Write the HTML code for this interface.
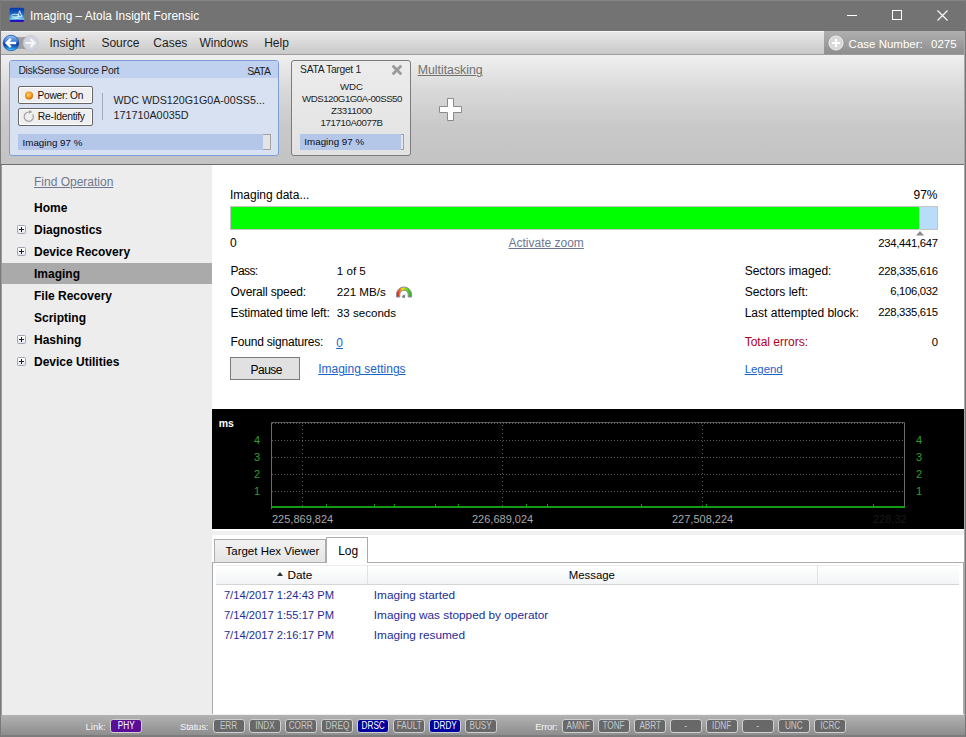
<!DOCTYPE html><html><head><meta charset="utf-8"><style>
html,body{margin:0;padding:0;width:966px;height:737px;overflow:hidden;font-family:"Liberation Sans", sans-serif;}
</style></head><body><div style="position:relative;width:966px;height:737px;overflow:hidden">
<div style="position:absolute;left:0px;top:0px;width:966px;height:737px;background:#f0f0f0"></div>
<div style="position:absolute;left:0px;top:0px;width:966px;height:31px;background:#737373"></div>
<div style="position:absolute;left:0px;top:0px;width:966px;height:1px;background:#858585"></div>
<svg style="position:absolute;left:9px;top:7px" width="16" height="16" viewBox="0 0 16 16">
<defs><linearGradient id="ig" x1="0" y1="0" x2="0" y2="1"><stop offset="0" stop-color="#0636a6"/><stop offset="0.4" stop-color="#1a62c4"/><stop offset="0.75" stop-color="#5ab6e6"/><stop offset="1" stop-color="#7ad8f0"/></linearGradient>
<radialGradient id="ic" cx="0.5" cy="0.5" r="0.5"><stop offset="0" stop-color="#b0fafc"/><stop offset="1" stop-color="#b0fafc" stop-opacity="0"/></radialGradient></defs>
<rect x="0.6" y="0.7" width="14.6" height="14.2" rx="1.6" fill="url(#ig)"/>
<ellipse cx="7.5" cy="11.6" rx="6.5" ry="2.8" fill="url(#ic)"/>
<path d="M0.6 13 Q8 11.8 15.2 13 L15.2 13.4 Q15.2 14.9 13.7 14.9 L2.1 14.9 Q0.6 14.9 0.6 13.4 Z" fill="#2612b6"/>
<ellipse cx="6.2" cy="8.7" rx="3.7" ry="1.5" fill="none" stroke="#eaf6ff" stroke-width="0.9"/>
<path d="M10.6 3.8 L8.9 9.4 L12.8 9.4 Z" fill="none" stroke="#eaf6ff" stroke-width="0.9" stroke-linejoin="round"/>
</svg>
<div style="position:absolute;top:7.88px;font-size:11.9px;line-height:16px;color:#ffffff;white-space:nowrap;left:30px;">Imaging – Atola Insight Forensic</div>
<div style="position:absolute;left:847px;top:15px;width:10px;height:1px;background:#fff"></div>
<div style="position:absolute;left:892px;top:10px;width:10px;height:10px;border:1px solid #fff;box-sizing:border-box"></div>
<svg style="position:absolute;left:937px;top:10px" width="11" height="11" viewBox="0 0 11 11"><path d="M0.5 0.5 L10.5 10.5 M10.5 0.5 L0.5 10.5" stroke="#fff" stroke-width="1.1"/></svg>
<div style="position:absolute;left:1px;top:31px;width:964px;height:23px;background:linear-gradient(#e9e9e9,#c9c9c9)"></div>
<div style="position:absolute;left:1px;top:31px;width:964px;height:1px;background:#f6f6f6"></div>
<div style="position:absolute;left:1px;top:54px;width:964px;height:1px;background:#9c9c9c"></div>
<svg style="position:absolute;left:0px;top:31px" width="42" height="24" viewBox="0 0 42 24">
<defs><linearGradient id="bb" x1="0" y1="0" x2="0" y2="1"><stop offset="0" stop-color="#9cc4f4"/><stop offset="0.4" stop-color="#3a7ad8"/><stop offset="0.55" stop-color="#0a3898"/><stop offset="0.8" stop-color="#1a7ad8"/><stop offset="1" stop-color="#5ae0fc"/></linearGradient></defs>
<path d="M11 4.5 Q21 8 31 4.5 L31 19.5 Q21 16 11 19.5 Z" fill="#9e9e9e"/>
<circle cx="30.8" cy="12" r="7.6" fill="#d2d4dd" stroke="#c2c6d6" stroke-width="0.8"/>
<path d="M25.5 12 H34 M30.5 8 L34.5 12 L30.5 16" stroke="#f6f6f8" stroke-width="2.2" fill="none"/>
<circle cx="11" cy="12" r="7.8" fill="url(#bb)" stroke="#1646a6" stroke-width="0.7"/>
<path d="M16.2 12 H7 M10.8 7.8 L6.6 12 L10.8 16.2" stroke="#fff" stroke-width="2.4" fill="none"/>
</svg>
<div style="position:absolute;top:34.84px;font-size:12px;line-height:16px;color:#1e1e1e;white-space:nowrap;left:49.5px;">Insight</div>
<div style="position:absolute;top:34.84px;font-size:12px;line-height:16px;color:#1e1e1e;white-space:nowrap;left:101.4px;">Source</div>
<div style="position:absolute;top:34.84px;font-size:12px;line-height:16px;color:#1e1e1e;white-space:nowrap;left:153.3px;">Cases</div>
<div style="position:absolute;top:34.84px;font-size:12px;line-height:16px;color:#1e1e1e;white-space:nowrap;left:199.4px;">Windows</div>
<div style="position:absolute;top:34.84px;font-size:12px;line-height:16px;color:#1e1e1e;white-space:nowrap;left:264.2px;">Help</div>
<div style="position:absolute;left:824px;top:31px;width:140px;height:23px;background:linear-gradient(#b0b0b0,#8e8e8e)"></div>
<svg style="position:absolute;left:828px;top:35px" width="16" height="16" viewBox="0 0 16 16">
<circle cx="8" cy="8" r="7" fill="#d8d8d8" stroke="#eeeeee" stroke-width="1"/>
<path d="M8 4 V12 M4 8 H12" stroke="#fff" stroke-width="2.2"/></svg>
<div style="position:absolute;top:36.02px;font-size:11.5px;line-height:16px;color:#ffffff;white-space:nowrap;left:848.6px;">Case Number:</div>
<div style="position:absolute;top:36.02px;font-size:11.5px;line-height:16px;color:#ffffff;white-space:nowrap;left:931px;">0275</div>
<div style="position:absolute;left:1px;top:55px;width:964px;height:109px;background:linear-gradient(#f0f0f0 0%,#dadada 30%,#c9c9c9 65%,#c3c3c3 100%)"></div>
<div style="position:absolute;left:1px;top:164px;width:964px;height:1px;background:#6e6e6e"></div>
<div style="position:absolute;left:9px;top:60px;width:270px;height:96px;border:1px solid #7e9dd4;border-radius:3px;box-sizing:border-box;background:#d7e1f1;overflow:hidden"></div>
<div style="position:absolute;left:10px;top:61px;width:268px;height:17px;background:#bfd1ef;border-radius:2px 2px 0 0"></div>
<div style="position:absolute;top:62.70px;font-size:10.4px;line-height:16px;color:#1e1e1e;white-space:nowrap;letter-spacing:-0.32px;left:18.4px;">DiskSense Source Port</div>
<div style="position:absolute;top:62.66px;font-size:10.5px;line-height:16px;color:#1e1e1e;white-space:nowrap;letter-spacing:-0.7px;right:695.8px;text-align:right;">SATA</div>
<div style="position:absolute;left:18px;top:86px;width:75px;height:18px;border:1px solid #666;border-radius:2px;box-sizing:border-box;background:#efefef;box-shadow:inset 0 0 0 1px #fff"></div>
<div style="position:absolute;left:18px;top:108px;width:75px;height:18px;border:1px solid #666;border-radius:2px;box-sizing:border-box;background:#efefef;box-shadow:inset 0 0 0 1px #fff"></div>
<div style="position:absolute;top:88.27px;font-size:10.2px;line-height:16px;color:#111;white-space:nowrap;letter-spacing:-0.3px;left:37.6px;">Power: On</div>
<div style="position:absolute;top:109.20px;font-size:10.4px;line-height:16px;color:#111;white-space:nowrap;letter-spacing:-0.3px;left:37.8px;">Re-Identify</div>
<svg style="position:absolute;left:24px;top:91px" width="10" height="10" viewBox="0 0 10 10">
<defs><radialGradient id="og" cx="0.45" cy="0.4" r="0.6"><stop offset="0" stop-color="#ffd27a"/><stop offset="0.6" stop-color="#f49a1a"/><stop offset="1" stop-color="#c86a00"/></radialGradient></defs>
<circle cx="5" cy="4.5" r="4" fill="url(#og)"/></svg>
<svg style="position:absolute;left:23px;top:109px" width="12" height="14" viewBox="0 0 12 14">
<path d="M9.78 5.4 A4.6 4.6 0 1 1 5.8 3.1" stroke="#a6a6a6" stroke-width="1.3" fill="none"/>
<path d="M6 1 L9.6 2.9 L6 4.8 Z" fill="#a6a6a6"/></svg>
<div style="position:absolute;left:102px;top:93px;width:1px;height:27px;background:#9fa9ba"></div>
<div style="position:absolute;top:92.29px;font-size:10.7px;line-height:16px;color:#1e1e1e;white-space:nowrap;left:113.4px;">WDC WDS120G1G0A-00SS5...</div>
<div style="position:absolute;top:107.26px;font-size:10.8px;line-height:16px;color:#1e1e1e;white-space:nowrap;left:113.4px;">171710A0035D</div>
<div style="position:absolute;left:18px;top:134px;width:253px;height:16px;background:#b5c7e8"></div>
<div style="position:absolute;left:263px;top:134px;width:8px;height:16px;background:#e4e4e4;border:1px solid #a2a2a2;border-left:none;box-sizing:border-box"></div>
<div style="position:absolute;top:134.70px;font-size:9.8px;line-height:16px;color:#0c0c14;white-space:nowrap;left:22.5px;">Imaging 97 %</div>
<div style="position:absolute;left:291px;top:60px;width:120px;height:96px;border:1px solid #7c7c7c;border-radius:3px;box-sizing:border-box;background:linear-gradient(#ececec,#e2e2e2)"></div>
<div style="position:absolute;top:62.43px;font-size:10.3px;line-height:16px;color:#1e1e1e;white-space:nowrap;letter-spacing:-0.3px;left:300.1px;">SATA Target 1</div>
<svg style="position:absolute;left:392px;top:65px" width="10" height="10" viewBox="0 0 10 10"><path d="M1.6 1.6 L8.4 8.4 M8.4 1.6 L1.6 8.4" stroke="#9a9a9a" stroke-width="2.8" stroke-linecap="square"/></svg>
<div style="position:absolute;top:79.44px;font-size:9.7px;line-height:16px;color:#1e1e1e;white-space:nowrap;left:151.5px;width:400px;text-align:center;">WDC</div>
<div style="position:absolute;top:91.14px;font-size:9.7px;line-height:16px;color:#1e1e1e;white-space:nowrap;letter-spacing:-0.5px;left:152px;width:400px;text-align:center;">WDS120G1G0A-00SS50</div>
<div style="position:absolute;top:103.04px;font-size:9.7px;line-height:16px;color:#1e1e1e;white-space:nowrap;letter-spacing:-0.25px;left:151.5px;width:400px;text-align:center;">Z3311000</div>
<div style="position:absolute;top:114.94px;font-size:9.7px;line-height:16px;color:#1e1e1e;white-space:nowrap;letter-spacing:-0.4px;left:151.5px;width:400px;text-align:center;">171710A0077B</div>
<div style="position:absolute;left:300px;top:134px;width:101px;height:16px;background:#b5c7e8"></div>
<div style="position:absolute;left:401px;top:134px;width:3px;height:16px;background:#e4e4e4;border:1px solid #a2a2a2;border-left:none;box-sizing:border-box"></div>
<div style="position:absolute;top:134.20px;font-size:9.8px;line-height:16px;color:#0c0c14;white-space:nowrap;left:304.3px;">Imaging 97 %</div>
<div style="position:absolute;top:62.24px;font-size:12.3px;line-height:16px;color:#727272;white-space:nowrap;left:417.7px;"><u>Multitasking</u></div>
<svg style="position:absolute;left:438px;top:97px" width="26" height="25" viewBox="0 0 26 25">
<path d="M9.5 1.5 H15.5 V9.5 H23.5 V15.5 H15.5 V23.5 H9.5 V15.5 H1.5 V9.5 H9.5 Z" fill="#fff" stroke="#8a8a8a" stroke-width="1"/></svg>
<div style="position:absolute;left:1px;top:165px;width:211px;height:550px;background:#ededed"></div>
<div style="position:absolute;top:173.84px;font-size:12px;line-height:16px;color:#6e7890;white-space:nowrap;left:34px;"><u>Find Operation</u></div>
<div style="position:absolute;left:1px;top:263px;width:211px;height:21px;background:#aaaaaa"></div>
<div style="position:absolute;top:199.84px;font-size:12px;line-height:16px;color:#000;white-space:nowrap;font-weight:bold;left:34px;">Home</div>
<div style="position:absolute;top:221.84px;font-size:12px;line-height:16px;color:#000;white-space:nowrap;font-weight:bold;left:34px;">Diagnostics</div>
<div style="position:absolute;left:17px;top:225px;width:9px;height:9px;border:1px solid #a0a4b4;border-radius:1.5px;box-sizing:border-box;background:linear-gradient(#ffffff,#e2e6ee)"></div>
<div style="position:absolute;left:19px;top:229px;width:5px;height:1px;background:#222"></div>
<div style="position:absolute;left:21px;top:227px;width:1px;height:5px;background:#222"></div>
<div style="position:absolute;top:243.84px;font-size:12px;line-height:16px;color:#000;white-space:nowrap;font-weight:bold;left:34px;">Device Recovery</div>
<div style="position:absolute;left:17px;top:247px;width:9px;height:9px;border:1px solid #a0a4b4;border-radius:1.5px;box-sizing:border-box;background:linear-gradient(#ffffff,#e2e6ee)"></div>
<div style="position:absolute;left:19px;top:251px;width:5px;height:1px;background:#222"></div>
<div style="position:absolute;left:21px;top:249px;width:1px;height:5px;background:#222"></div>
<div style="position:absolute;top:265.84px;font-size:12px;line-height:16px;color:#000;white-space:nowrap;font-weight:bold;left:34px;">Imaging</div>
<div style="position:absolute;top:287.84px;font-size:12px;line-height:16px;color:#000;white-space:nowrap;font-weight:bold;left:34px;">File Recovery</div>
<div style="position:absolute;top:309.84px;font-size:12px;line-height:16px;color:#000;white-space:nowrap;font-weight:bold;left:34px;">Scripting</div>
<div style="position:absolute;top:331.84px;font-size:12px;line-height:16px;color:#000;white-space:nowrap;font-weight:bold;left:34px;">Hashing</div>
<div style="position:absolute;left:17px;top:335px;width:9px;height:9px;border:1px solid #a0a4b4;border-radius:1.5px;box-sizing:border-box;background:linear-gradient(#ffffff,#e2e6ee)"></div>
<div style="position:absolute;left:19px;top:339px;width:5px;height:1px;background:#222"></div>
<div style="position:absolute;left:21px;top:337px;width:1px;height:5px;background:#222"></div>
<div style="position:absolute;top:353.84px;font-size:12px;line-height:16px;color:#000;white-space:nowrap;font-weight:bold;left:34px;">Device Utilities</div>
<div style="position:absolute;left:17px;top:357px;width:9px;height:9px;border:1px solid #a0a4b4;border-radius:1.5px;box-sizing:border-box;background:linear-gradient(#ffffff,#e2e6ee)"></div>
<div style="position:absolute;left:19px;top:361px;width:5px;height:1px;background:#222"></div>
<div style="position:absolute;left:21px;top:359px;width:1px;height:5px;background:#222"></div>
<div style="position:absolute;left:212px;top:165px;width:752px;height:549px;background:#ffffff"></div>
<div style="position:absolute;top:186.84px;font-size:12px;line-height:16px;color:#000;white-space:nowrap;left:230px;">Imaging data...</div>
<div style="position:absolute;top:186.84px;font-size:12px;line-height:16px;color:#000;white-space:nowrap;right:28.5px;text-align:right;">97%</div>
<div style="position:absolute;left:230px;top:206px;width:708px;height:24px;border:1px solid #c4c4c4;box-sizing:border-box;background:#b8dcfa"></div>
<div style="position:absolute;left:231px;top:207px;width:688px;height:22px;background:#00ff00"></div>
<svg style="position:absolute;left:915px;top:230px" width="10" height="6" viewBox="0 0 10 6"><path d="M1 5.5 L5 1 L9 5.5 Z" fill="#8a8a8a"/></svg>
<div style="position:absolute;top:234.54px;font-size:12px;line-height:16px;color:#000;white-space:nowrap;left:230px;">0</div>
<div style="position:absolute;top:234.84px;font-size:12px;line-height:16px;color:#6b7792;white-space:nowrap;left:508.5px;"><u>Activate zoom</u></div>
<div style="position:absolute;top:234.88px;font-size:11.3px;line-height:16px;color:#000;white-space:nowrap;letter-spacing:-0.3px;right:28.200000000000045px;text-align:right;">234,441,647</div>
<div style="position:absolute;top:262.94px;font-size:12px;line-height:16px;color:#000;white-space:nowrap;letter-spacing:-0.6px;left:230.6px;">Pass:</div>
<div style="position:absolute;top:263.08px;font-size:11.6px;line-height:16px;color:#000;white-space:nowrap;left:336.8px;">1 of 5</div>
<div style="position:absolute;top:283.64px;font-size:12px;line-height:16px;color:#000;white-space:nowrap;letter-spacing:-0.15px;left:230.6px;">Overall speed:</div>
<div style="position:absolute;top:283.78px;font-size:11.6px;line-height:16px;color:#000;white-space:nowrap;left:336.8px;">221 MB/s</div>
<div style="position:absolute;top:304.54px;font-size:12px;line-height:16px;color:#000;white-space:nowrap;letter-spacing:-0.15px;left:230.6px;">Estimated time left:</div>
<div style="position:absolute;top:304.68px;font-size:11.6px;line-height:16px;color:#000;white-space:nowrap;left:336.8px;">33 seconds</div>
<svg style="position:absolute;left:395px;top:286px" width="18" height="13" viewBox="0 0 18 13">
<defs><linearGradient id="gg" x1="0" y1="0" x2="1" y2="0"><stop offset="0.05" stop-color="#e81818"/><stop offset="0.25" stop-color="#f08018"/><stop offset="0.4" stop-color="#f0e010"/><stop offset="0.6" stop-color="#80e020"/><stop offset="1" stop-color="#20b020"/></linearGradient></defs>
<path d="M1.5 11 L1.5 8.5 A7.5 7.5 0 0 1 16.5 8.5 L16.5 11 L13.2 11 L13.2 8.5 A4.2 4.2 0 0 0 4.8 8.5 L4.8 11 Z" fill="url(#gg)" stroke="#8a8a9a" stroke-width="1"/>
<path d="M8 11.5 L10.5 7.5 L9.8 11.2 Z" fill="#808080"/><circle cx="8.6" cy="10.5" r="1.5" fill="#808080"/></svg>
<div style="position:absolute;top:333.54px;font-size:12px;line-height:16px;color:#000;white-space:nowrap;letter-spacing:-0.2px;left:230.6px;">Found signatures:</div>
<div style="position:absolute;top:334.54px;font-size:12px;line-height:16px;color:#1a62cc;white-space:nowrap;left:336.2px;"><u>0</u></div>
<div style="position:absolute;left:230px;top:357px;width:70px;height:23px;border:1px solid #7a7a7a;box-sizing:border-box;background:#e1e1e1"></div>
<div style="position:absolute;top:361.64px;font-size:12px;line-height:16px;color:#000;white-space:nowrap;letter-spacing:-0.5px;left:250.5px;">Pause</div>
<div style="position:absolute;top:361.44px;font-size:12px;line-height:16px;color:#1a62cc;white-space:nowrap;left:318.2px;"><u>Imaging settings</u></div>
<div style="position:absolute;top:263.14px;font-size:12px;line-height:16px;color:#000;white-space:nowrap;left:744.7px;">Sectors imaged:</div>
<div style="position:absolute;top:262.68px;font-size:11.3px;line-height:16px;color:#000;white-space:nowrap;letter-spacing:-0.3px;right:28.200000000000045px;text-align:right;">228,335,616</div>
<div style="position:absolute;top:283.94px;font-size:12px;line-height:16px;color:#000;white-space:nowrap;left:744.7px;">Sectors left:</div>
<div style="position:absolute;top:283.48px;font-size:11.3px;line-height:16px;color:#000;white-space:nowrap;letter-spacing:-0.3px;right:28.200000000000045px;text-align:right;">6,106,032</div>
<div style="position:absolute;top:304.84px;font-size:12px;line-height:16px;color:#000;white-space:nowrap;left:744.7px;">Last attempted block:</div>
<div style="position:absolute;top:304.38px;font-size:11.3px;line-height:16px;color:#000;white-space:nowrap;letter-spacing:-0.3px;right:28.200000000000045px;text-align:right;">228,335,615</div>
<div style="position:absolute;top:334.04px;font-size:12px;line-height:16px;color:#b0001e;white-space:nowrap;left:744.7px;">Total errors:</div>
<div style="position:absolute;top:333.58px;font-size:11.3px;line-height:16px;color:#000;white-space:nowrap;letter-spacing:-0.3px;right:28.200000000000045px;text-align:right;">0</div>
<div style="position:absolute;top:361.25px;font-size:11.4px;line-height:16px;color:#1a62cc;white-space:nowrap;left:744.7px;"><u>Legend</u></div>
<div style="position:absolute;left:212px;top:409px;width:752px;height:120px;background:#000"></div>
<div style="position:absolute;top:415.36px;font-size:10.5px;line-height:16px;color:#fff;white-space:nowrap;font-weight:bold;left:218.7px;">ms</div>
<div style="position:absolute;top:431.79px;font-size:11px;line-height:16px;color:#2aa12a;white-space:nowrap;left:254px;">4</div>
<div style="position:absolute;top:431.79px;font-size:11px;line-height:16px;color:#2aa12a;white-space:nowrap;left:916px;">4</div>
<div style="position:absolute;top:448.99px;font-size:11px;line-height:16px;color:#2aa12a;white-space:nowrap;left:254px;">3</div>
<div style="position:absolute;top:448.99px;font-size:11px;line-height:16px;color:#2aa12a;white-space:nowrap;left:916px;">3</div>
<div style="position:absolute;top:465.99px;font-size:11px;line-height:16px;color:#2aa12a;white-space:nowrap;left:254px;">2</div>
<div style="position:absolute;top:465.99px;font-size:11px;line-height:16px;color:#2aa12a;white-space:nowrap;left:916px;">2</div>
<div style="position:absolute;top:482.89px;font-size:11px;line-height:16px;color:#2aa12a;white-space:nowrap;left:254px;">1</div>
<div style="position:absolute;top:482.89px;font-size:11px;line-height:16px;color:#2aa12a;white-space:nowrap;left:916px;">1</div>
<svg style="position:absolute;left:212px;top:409px" width="752" height="120" viewBox="0 0 752 120"><line x1="59.5" y1="13.5" x2="59.5" y2="100" stroke="#6a6a6a" stroke-width="1"/><line x1="692.5" y1="13.5" x2="692.5" y2="99" stroke="#6a6a6a" stroke-width="1"/><line x1="59.5" y1="13.5" x2="692.5" y2="13.5" stroke="#5a5a5a" stroke-width="1"/><line x1="60" y1="14.5" x2="692" y2="14.5" stroke="#5a5a5a" stroke-width="1" stroke-dasharray="1 2"/><line x1="60" y1="31.5" x2="692" y2="31.5" stroke="#5a5a5a" stroke-width="1" stroke-dasharray="1 2"/><line x1="60" y1="48.5" x2="692" y2="48.5" stroke="#5a5a5a" stroke-width="1" stroke-dasharray="1 2"/><line x1="60" y1="65.5" x2="692" y2="65.5" stroke="#5a5a5a" stroke-width="1" stroke-dasharray="1 2"/><line x1="60" y1="82.5" x2="692" y2="82.5" stroke="#5a5a5a" stroke-width="1" stroke-dasharray="1 2"/><line x1="90.5" y1="16" x2="90.5" y2="97" stroke="#5a5a5a" stroke-width="1" stroke-dasharray="1 3"/><line x1="290.5" y1="16" x2="290.5" y2="97" stroke="#5a5a5a" stroke-width="1" stroke-dasharray="1 3"/><line x1="490.5" y1="16" x2="490.5" y2="97" stroke="#5a5a5a" stroke-width="1" stroke-dasharray="1 3"/><line x1="59" y1="98" x2="693" y2="98" stroke="#159a15" stroke-width="2"/><line x1="114.5" y1="95" x2="114.5" y2="97" stroke="#159a15" stroke-width="1"/><line x1="162.5" y1="95" x2="162.5" y2="97" stroke="#159a15" stroke-width="1"/><line x1="182.5" y1="95" x2="182.5" y2="97" stroke="#159a15" stroke-width="1"/><line x1="223.5" y1="95" x2="223.5" y2="97" stroke="#159a15" stroke-width="1"/><line x1="246.5" y1="95" x2="246.5" y2="97" stroke="#159a15" stroke-width="1"/><line x1="314.5" y1="95" x2="314.5" y2="97" stroke="#159a15" stroke-width="1"/><line x1="335.5" y1="95" x2="335.5" y2="97" stroke="#159a15" stroke-width="1"/><line x1="429.5" y1="95" x2="429.5" y2="97" stroke="#159a15" stroke-width="1"/><line x1="494.5" y1="95" x2="494.5" y2="97" stroke="#159a15" stroke-width="1"/><line x1="661.5" y1="95" x2="661.5" y2="97" stroke="#159a15" stroke-width="1"/></svg>
<div style="position:absolute;top:510.89px;font-size:11px;line-height:16px;color:#a8a8a8;white-space:nowrap;left:272px;">225,869,824</div>
<div style="position:absolute;top:510.89px;font-size:11px;line-height:16px;color:#a8a8a8;white-space:nowrap;left:472px;">226,689,024</div>
<div style="position:absolute;top:510.89px;font-size:11px;line-height:16px;color:#a8a8a8;white-space:nowrap;left:672px;">227,508,224</div>
<div style="position:absolute;top:510.89px;font-size:11px;line-height:16px;color:#1a1a1a;white-space:nowrap;left:873px;">228,32</div>
<div style="position:absolute;left:212px;top:531px;width:752px;height:4px;background:#f0f0f0"></div>
<div style="position:absolute;left:214px;top:539px;width:112px;height:24px;border:1px solid #acacac;border-bottom:none;box-sizing:border-box;background:linear-gradient(#f2f2f2,#e4e4e4)"></div>
<div style="position:absolute;left:212px;top:562px;width:752px;height:1px;background:#acacac"></div>
<div style="position:absolute;left:326px;top:537px;width:42px;height:26px;border:1px solid #acacac;border-bottom:none;box-sizing:border-box;background:#fff"></div>
<div style="position:absolute;top:542.82px;font-size:11.5px;line-height:16px;color:#000;white-space:nowrap;left:225.5px;">Target Hex Viewer</div>
<div style="position:absolute;top:542.64px;font-size:12px;line-height:16px;color:#000;white-space:nowrap;left:338.2px;">Log</div>
<div style="position:absolute;left:212px;top:563px;width:1px;height:151px;background:#acacac"></div>
<div style="position:absolute;left:216px;top:565px;width:743px;height:20px;background:linear-gradient(#ffffff,#f2f4f6);border-top:1px solid #ededed;border-bottom:1px solid #d5d5d5;box-sizing:border-box"></div>
<div style="position:absolute;left:367px;top:565px;width:1px;height:19px;background:#e2e2e2"></div>
<div style="position:absolute;left:817px;top:565px;width:1px;height:19px;background:#e2e2e2"></div>
<svg style="position:absolute;left:277px;top:572px" width="6" height="4" viewBox="0 0 6 4"><path d="M0 4 L3 0 L6 4 Z" fill="#333"/></svg>
<div style="position:absolute;top:566.71px;font-size:11.8px;line-height:16px;color:#000;white-space:nowrap;left:287.5px;">Date</div>
<div style="position:absolute;top:567.05px;font-size:11.4px;line-height:16px;color:#000;white-space:nowrap;left:568.7px;">Message</div>
<div style="position:absolute;top:587.12px;font-size:11.2px;line-height:16px;color:#1e2d96;white-space:nowrap;left:223.9px;">7/14/2017 1:24:43 PM</div>
<div style="position:absolute;top:586.91px;font-size:11.8px;line-height:16px;color:#1e2d96;white-space:nowrap;left:373.8px;">Imaging started</div>
<div style="position:absolute;top:607.32px;font-size:11.2px;line-height:16px;color:#1e2d96;white-space:nowrap;left:223.9px;">7/14/2017 1:55:17 PM</div>
<div style="position:absolute;top:607.11px;font-size:11.8px;line-height:16px;color:#1e2d96;white-space:nowrap;left:373.8px;">Imaging was stopped by operator</div>
<div style="position:absolute;top:626.92px;font-size:11.2px;line-height:16px;color:#1e2d96;white-space:nowrap;left:223.9px;">7/14/2017 2:16:17 PM</div>
<div style="position:absolute;top:626.71px;font-size:11.8px;line-height:16px;color:#1e2d96;white-space:nowrap;left:373.8px;">Imaging resumed</div>
<div style="position:absolute;left:963px;top:562px;width:1px;height:152px;background:#acacac"></div>
<div style="position:absolute;left:964px;top:31px;width:1px;height:706px;background:#a8a8a8"></div>
<div style="position:absolute;left:965px;top:0px;width:1px;height:737px;background:#767676"></div>
<div style="position:absolute;left:0px;top:0px;width:1px;height:737px;background:#7a7a7a"></div>
<div style="position:absolute;left:1px;top:165px;width:1px;height:550px;background:#9a9a9a"></div>
<div style="position:absolute;left:1px;top:715px;width:964px;height:22px;background:linear-gradient(#b2b2b2,#8a8a8a)"></div>
<div style="position:absolute;left:1px;top:735px;width:964px;height:2px;background:#7c7c7c"></div>
<div style="position:absolute;top:718.71px;font-size:9.5px;line-height:16px;color:#f4f4f4;white-space:nowrap;left:85.5px;">Link:</div>
<div style="position:absolute;top:718.71px;font-size:9.5px;line-height:16px;color:#f4f4f4;white-space:nowrap;letter-spacing:-0.2px;left:180px;">Status:</div>
<div style="position:absolute;top:718.71px;font-size:9.5px;line-height:16px;color:#f4f4f4;white-space:nowrap;letter-spacing:-0.3px;left:535.3px;">Error:</div>
<div style="position:absolute;left:110px;top:719px;width:32px;height:14px;box-sizing:border-box;border:1px solid #d0d0d0;border-radius:3px;background:#5a0e98;color:#fff;font-size:10px;line-height:12.5px;text-align:center;overflow:hidden"><span style="display:inline-block;transform:scaleX(0.82);transform-origin:50% 50%">PHY</span></div>
<div style="position:absolute;left:213px;top:719px;width:32px;height:14px;box-sizing:border-box;border:1px solid #d0d0d0;border-radius:3px;background:#686868;color:#c4c8cc;font-size:10px;line-height:12.5px;text-align:center;overflow:hidden"><span style="display:inline-block;transform:scaleX(0.82);transform-origin:50% 50%">ERR</span></div>
<div style="position:absolute;left:249px;top:719px;width:32px;height:14px;box-sizing:border-box;border:1px solid #d0d0d0;border-radius:3px;background:#686868;color:#c4c8cc;font-size:10px;line-height:12.5px;text-align:center;overflow:hidden"><span style="display:inline-block;transform:scaleX(0.82);transform-origin:50% 50%">INDX</span></div>
<div style="position:absolute;left:285px;top:719px;width:32px;height:14px;box-sizing:border-box;border:1px solid #d0d0d0;border-radius:3px;background:#686868;color:#c4c8cc;font-size:10px;line-height:12.5px;text-align:center;overflow:hidden"><span style="display:inline-block;transform:scaleX(0.82);transform-origin:50% 50%">CORR</span></div>
<div style="position:absolute;left:321px;top:719px;width:32px;height:14px;box-sizing:border-box;border:1px solid #d0d0d0;border-radius:3px;background:#686868;color:#c4c8cc;font-size:10px;line-height:12.5px;text-align:center;overflow:hidden"><span style="display:inline-block;transform:scaleX(0.82);transform-origin:50% 50%">DREQ</span></div>
<div style="position:absolute;left:357px;top:719px;width:32px;height:14px;box-sizing:border-box;border:1px solid #d0d0d0;border-radius:3px;background:#0000a0;color:#fff;font-size:10px;line-height:12.5px;text-align:center;overflow:hidden"><span style="display:inline-block;transform:scaleX(0.82);transform-origin:50% 50%">DRSC</span></div>
<div style="position:absolute;left:393px;top:719px;width:32px;height:14px;box-sizing:border-box;border:1px solid #d0d0d0;border-radius:3px;background:#686868;color:#c4c8cc;font-size:10px;line-height:12.5px;text-align:center;overflow:hidden"><span style="display:inline-block;transform:scaleX(0.82);transform-origin:50% 50%">FAULT</span></div>
<div style="position:absolute;left:429px;top:719px;width:32px;height:14px;box-sizing:border-box;border:1px solid #d0d0d0;border-radius:3px;background:#0000a0;color:#fff;font-size:10px;line-height:12.5px;text-align:center;overflow:hidden"><span style="display:inline-block;transform:scaleX(0.82);transform-origin:50% 50%">DRDY</span></div>
<div style="position:absolute;left:465px;top:719px;width:32px;height:14px;box-sizing:border-box;border:1px solid #d0d0d0;border-radius:3px;background:#686868;color:#c4c8cc;font-size:10px;line-height:12.5px;text-align:center;overflow:hidden"><span style="display:inline-block;transform:scaleX(0.82);transform-origin:50% 50%">BUSY</span></div>
<div style="position:absolute;left:562px;top:719px;width:32px;height:14px;box-sizing:border-box;border:1px solid #d0d0d0;border-radius:3px;background:#686868;color:#c4c8cc;font-size:10px;line-height:12.5px;text-align:center;overflow:hidden"><span style="display:inline-block;transform:scaleX(0.82);transform-origin:50% 50%">AMNF</span></div>
<div style="position:absolute;left:598px;top:719px;width:32px;height:14px;box-sizing:border-box;border:1px solid #d0d0d0;border-radius:3px;background:#686868;color:#c4c8cc;font-size:10px;line-height:12.5px;text-align:center;overflow:hidden"><span style="display:inline-block;transform:scaleX(0.82);transform-origin:50% 50%">TONF</span></div>
<div style="position:absolute;left:634px;top:719px;width:32px;height:14px;box-sizing:border-box;border:1px solid #d0d0d0;border-radius:3px;background:#686868;color:#c4c8cc;font-size:10px;line-height:12.5px;text-align:center;overflow:hidden"><span style="display:inline-block;transform:scaleX(0.82);transform-origin:50% 50%">ABRT</span></div>
<div style="position:absolute;left:670px;top:719px;width:32px;height:14px;box-sizing:border-box;border:1px solid #d0d0d0;border-radius:3px;background:#686868;color:#c4c8cc;font-size:10px;line-height:12.5px;text-align:center;overflow:hidden"><span style="display:inline-block;transform:scaleX(0.82);transform-origin:50% 50%">-</span></div>
<div style="position:absolute;left:706px;top:719px;width:32px;height:14px;box-sizing:border-box;border:1px solid #d0d0d0;border-radius:3px;background:#686868;color:#c4c8cc;font-size:10px;line-height:12.5px;text-align:center;overflow:hidden"><span style="display:inline-block;transform:scaleX(0.82);transform-origin:50% 50%">IDNF</span></div>
<div style="position:absolute;left:742px;top:719px;width:32px;height:14px;box-sizing:border-box;border:1px solid #d0d0d0;border-radius:3px;background:#686868;color:#c4c8cc;font-size:10px;line-height:12.5px;text-align:center;overflow:hidden"><span style="display:inline-block;transform:scaleX(0.82);transform-origin:50% 50%">-</span></div>
<div style="position:absolute;left:778px;top:719px;width:32px;height:14px;box-sizing:border-box;border:1px solid #d0d0d0;border-radius:3px;background:#686868;color:#c4c8cc;font-size:10px;line-height:12.5px;text-align:center;overflow:hidden"><span style="display:inline-block;transform:scaleX(0.82);transform-origin:50% 50%">UNC</span></div>
<div style="position:absolute;left:814px;top:719px;width:32px;height:14px;box-sizing:border-box;border:1px solid #d0d0d0;border-radius:3px;background:#686868;color:#c4c8cc;font-size:10px;line-height:12.5px;text-align:center;overflow:hidden"><span style="display:inline-block;transform:scaleX(0.82);transform-origin:50% 50%">ICRC</span></div>
</div></body></html>
